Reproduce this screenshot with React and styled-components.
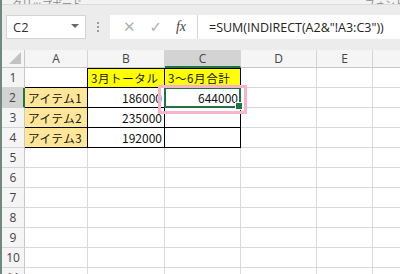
import React from 'react'
import styled, { createGlobalStyle } from 'styled-components'

const GlobalStyle = createGlobalStyle`
  html, body { margin: 0; padding: 0; background: #fff; }
  * { box-sizing: border-box; }
`

const Window = styled.div`
  width: 400px;
  height: 274px;
  overflow: hidden;
  border-left: 2px solid #6f8a7c;
  background: #ececec;
  font-family: "Noto Sans CJK JP", "Noto Sans", sans-serif;
`

const Ribbon = styled.div`
  height: 5px;
  overflow: hidden;
  display: flex;
  align-items: flex-end;
  border-bottom: 1px solid #dcdcdc;
  background: #f3f3f3;
`

const RibbonLabel = styled.span`
  font-size: 10px;
  line-height: 10px;
  margin-bottom: -5px;
  margin-left: ${p => p.$left}px;
  color: #8a8a8a;
  white-space: nowrap;
`

const FormulaBar = styled.div`
  display: flex;
  align-items: center;
  height: 39px;
  padding: 7px 0 2px 4px;
`

const NameBox = styled.div`
  width: 80px;
  height: 24px;
  background: #fff;
  border: 1px solid #d4d4d4;
  display: flex;
  align-items: center;
  justify-content: space-between;
  padding: 0 6px 0 6px;
  font-family: "Open Sans", "Noto Sans", sans-serif;
  font-size: 13px;
  color: #333;
`

const Caret = styled.span`
  width: 0;
  height: 0;
  border-left: 4px solid transparent;
  border-right: 4px solid transparent;
  border-top: 4px solid #666;
  margin-top: -3px;
`

const Grip = styled.div`
  width: 24px;
  display: flex;
  flex-direction: column;
  align-items: center;
  gap: 2px;
`

const GripDot = styled.span`
  width: 2px;
  height: 2px;
  background: #9a9a9a;
`

const Buttons = styled.div`
  width: 88px;
  height: 24px;
  background: #fff;
  border-right: 1px solid #d6d6d6;
  display: flex;
  align-items: center;
  justify-content: space-around;
  padding: 0 4px 0 6px;
`

const IconGlyph = styled.span`
  font-size: ${p => p.$size || 14}px;
  color: ${p => p.$color || '#b0b0b0'};
  font-family: ${p => (p.$serif ? '"Liberation Serif", serif' : '"DejaVu Sans", sans-serif')};
  font-style: ${p => (p.$serif ? 'italic' : 'normal')};
  line-height: 1;
`

const FormulaInput = styled.div`
  flex: 1;
  height: 24px;
  background: #fff;
  display: flex;
  align-items: center;
  padding-left: 11px;
  font-family: "Open Sans", "Noto Sans", sans-serif;
  font-size: 12.5px;
  color: #222;
  white-space: nowrap;
`

const Gap = styled.div`
  height: 6px;
`

const Sheet = styled.div`
  display: grid;
  grid-template-columns: 23px 63px 77px 76px 76px 56px 40px;
  grid-template-rows: 18px repeat(11, 20px);
  background: #fff;
`

const Corner = styled.div`
  position: relative;
  background: #f5f5f5;
  border-right: 1px solid #c8c8c8;
  border-bottom: 1px solid #c8c8c8;
  &::after {
    content: "";
    position: absolute;
    right: 3px;
    bottom: 3px;
    width: 0;
    height: 0;
    border-left: 12px solid transparent;
    border-bottom: 12px solid #c2c2c2;
  }
`

const ColHead = styled.div`
  background: ${p => (p.$active ? '#d3d3d3' : '#f5f5f5')};
  border-right: 1px solid #d4d4d4;
  border-bottom: ${p => (p.$active ? '2px solid #217346' : '1px solid #c8c8c8')};
  display: flex;
  align-items: center;
  justify-content: center;
  font-family: "Open Sans", "Noto Sans", sans-serif;
  font-size: 12px;
  color: #444;
`

const RowHead = styled.div`
  background: ${p => (p.$active ? '#d3d3d3' : '#f5f5f5')};
  border-right: ${p => (p.$active ? '2px solid #217346' : '1px solid #c8c8c8')};
  border-bottom: 1px solid #d4d4d4;
  display: flex;
  align-items: center;
  justify-content: center;
  font-family: "Open Sans", "Noto Sans", sans-serif;
  font-size: 12px;
  color: #444;
`

const Cell = styled.div`
  position: relative;
  z-index: ${p => (p.$selected ? 2 : 'auto')};
  background: ${p => p.$fill || '#fff'};
  border-right: 1px solid ${p => (p.$br ? '#000' : '#d9d9d9')};
  border-bottom: 1px solid ${p => (p.$bb ? '#000' : '#d9d9d9')};
  box-shadow: ${p => (p.$bt ? 'inset 0 1px 0 #000' : 'none')};
  display: flex;
  align-items: center;
  justify-content: ${p => (p.$num ? 'flex-end' : 'flex-start')};
  padding: 0 2px 0 3px;
  font-size: ${p => (p.$num ? 12 : 11.5)}px;
  letter-spacing: ${p => (p.$num ? '0' : '0.6px')};
  color: #111;
  white-space: nowrap;
`

const Selection = styled.div`
  position: absolute;
  left: -1px;
  top: -1px;
  right: -1px;
  bottom: -1px;
  border: 2px solid #217346;
  pointer-events: none;
  &::after {
    content: "";
    position: absolute;
    right: -4px;
    bottom: -4px;
    width: 6px;
    height: 6px;
    background: #217346;
    border: 1px solid #fff;
  }
`

const Highlight = styled.div`
  position: absolute;
  left: -7px;
  top: -3px;
  width: 89px;
  height: 29px;
  border: 3px solid #f4b4c9;
  pointer-events: none;
`

const FEdge = styled.span`
  width: 3px;
  height: 10px;
  margin-left: auto;
  background: #f0b070;
`

const columns = ['A', 'B', 'C', 'D', 'E', 'F']
const yellow = '#ffff00'
const orange = '#ffe699'

const data = {
  1: [{}, { text: '3月トータル', fill: yellow, br: true, bb: true, bt: true }, { text: '3～6月合計', fill: yellow, br: true, bb: true, bt: true }],
  2: [{ text: 'アイテム1', fill: orange, br: true, bb: true }, { text: '186000', num: true, br: true, bb: true }, { text: '644000', num: true, br: true, bb: true, selected: true }],
  3: [{ text: 'アイテム2', fill: orange, br: true, bb: true }, { text: '235000', num: true, br: true, bb: true }, { br: true, bb: true }],
  4: [{ text: 'アイテム3', fill: orange, br: true, bb: true }, { text: '192000', num: true, br: true, bb: true }, { br: true, bb: true }],
}

const App = () => {
  const rows = Array.from({ length: 11 }, (_, i) => i + 1)
  return (
    <Window>
      <GlobalStyle />
      <Ribbon>
        <RibbonLabel $left={10}>クリップボード</RibbonLabel>
        <RibbonLabel $left={10}>ᴗ</RibbonLabel>
        <RibbonLabel $left={190}>ᴗ</RibbonLabel>
        <RibbonLabel $left={70}>フォント</RibbonLabel>
      </Ribbon>
      <FormulaBar>
        <NameBox>
          C2
          <Caret />
        </NameBox>
        <Grip>
          <GripDot />
          <GripDot />
          <GripDot />
        </Grip>
        <Buttons>
          <IconGlyph $size={15}>✕</IconGlyph>
          <IconGlyph $size={15}>✓</IconGlyph>
          <IconGlyph $serif $size={14} $color="#444">fx</IconGlyph>
        </Buttons>
        <FormulaInput>=SUM(INDIRECT(A2&"!A3:C3"))</FormulaInput>
      </FormulaBar>
      <Gap />
      <Sheet>
        <Corner />
        {columns.map(c => (
          <ColHead key={c} $active={c === 'C'}>
            {c === 'F' ? <FEdge /> : c}
          </ColHead>
        ))}
        {rows.map(r => (
          <React.Fragment key={r}>
            <RowHead $active={r === 2}>{r}</RowHead>
            {columns.map((c, ci) => {
              const d = (data[r] && data[r][ci]) || {}
              const aboveTable = r === 1 && ci === 0
              return (
                <Cell
                  key={c}
                  $fill={d.fill}
                  $num={d.num}
                  $selected={d.selected}
                  $br={d.br || aboveTable}
                  $bb={d.bb || aboveTable}
                  $bt={d.bt}
                >
                  {d.text}
                  {d.selected && <Selection />}
                  {d.selected && <Highlight />}
                </Cell>
              )
            })}
          </React.Fragment>
        ))}
      </Sheet>
    </Window>
  )
}

export default App
